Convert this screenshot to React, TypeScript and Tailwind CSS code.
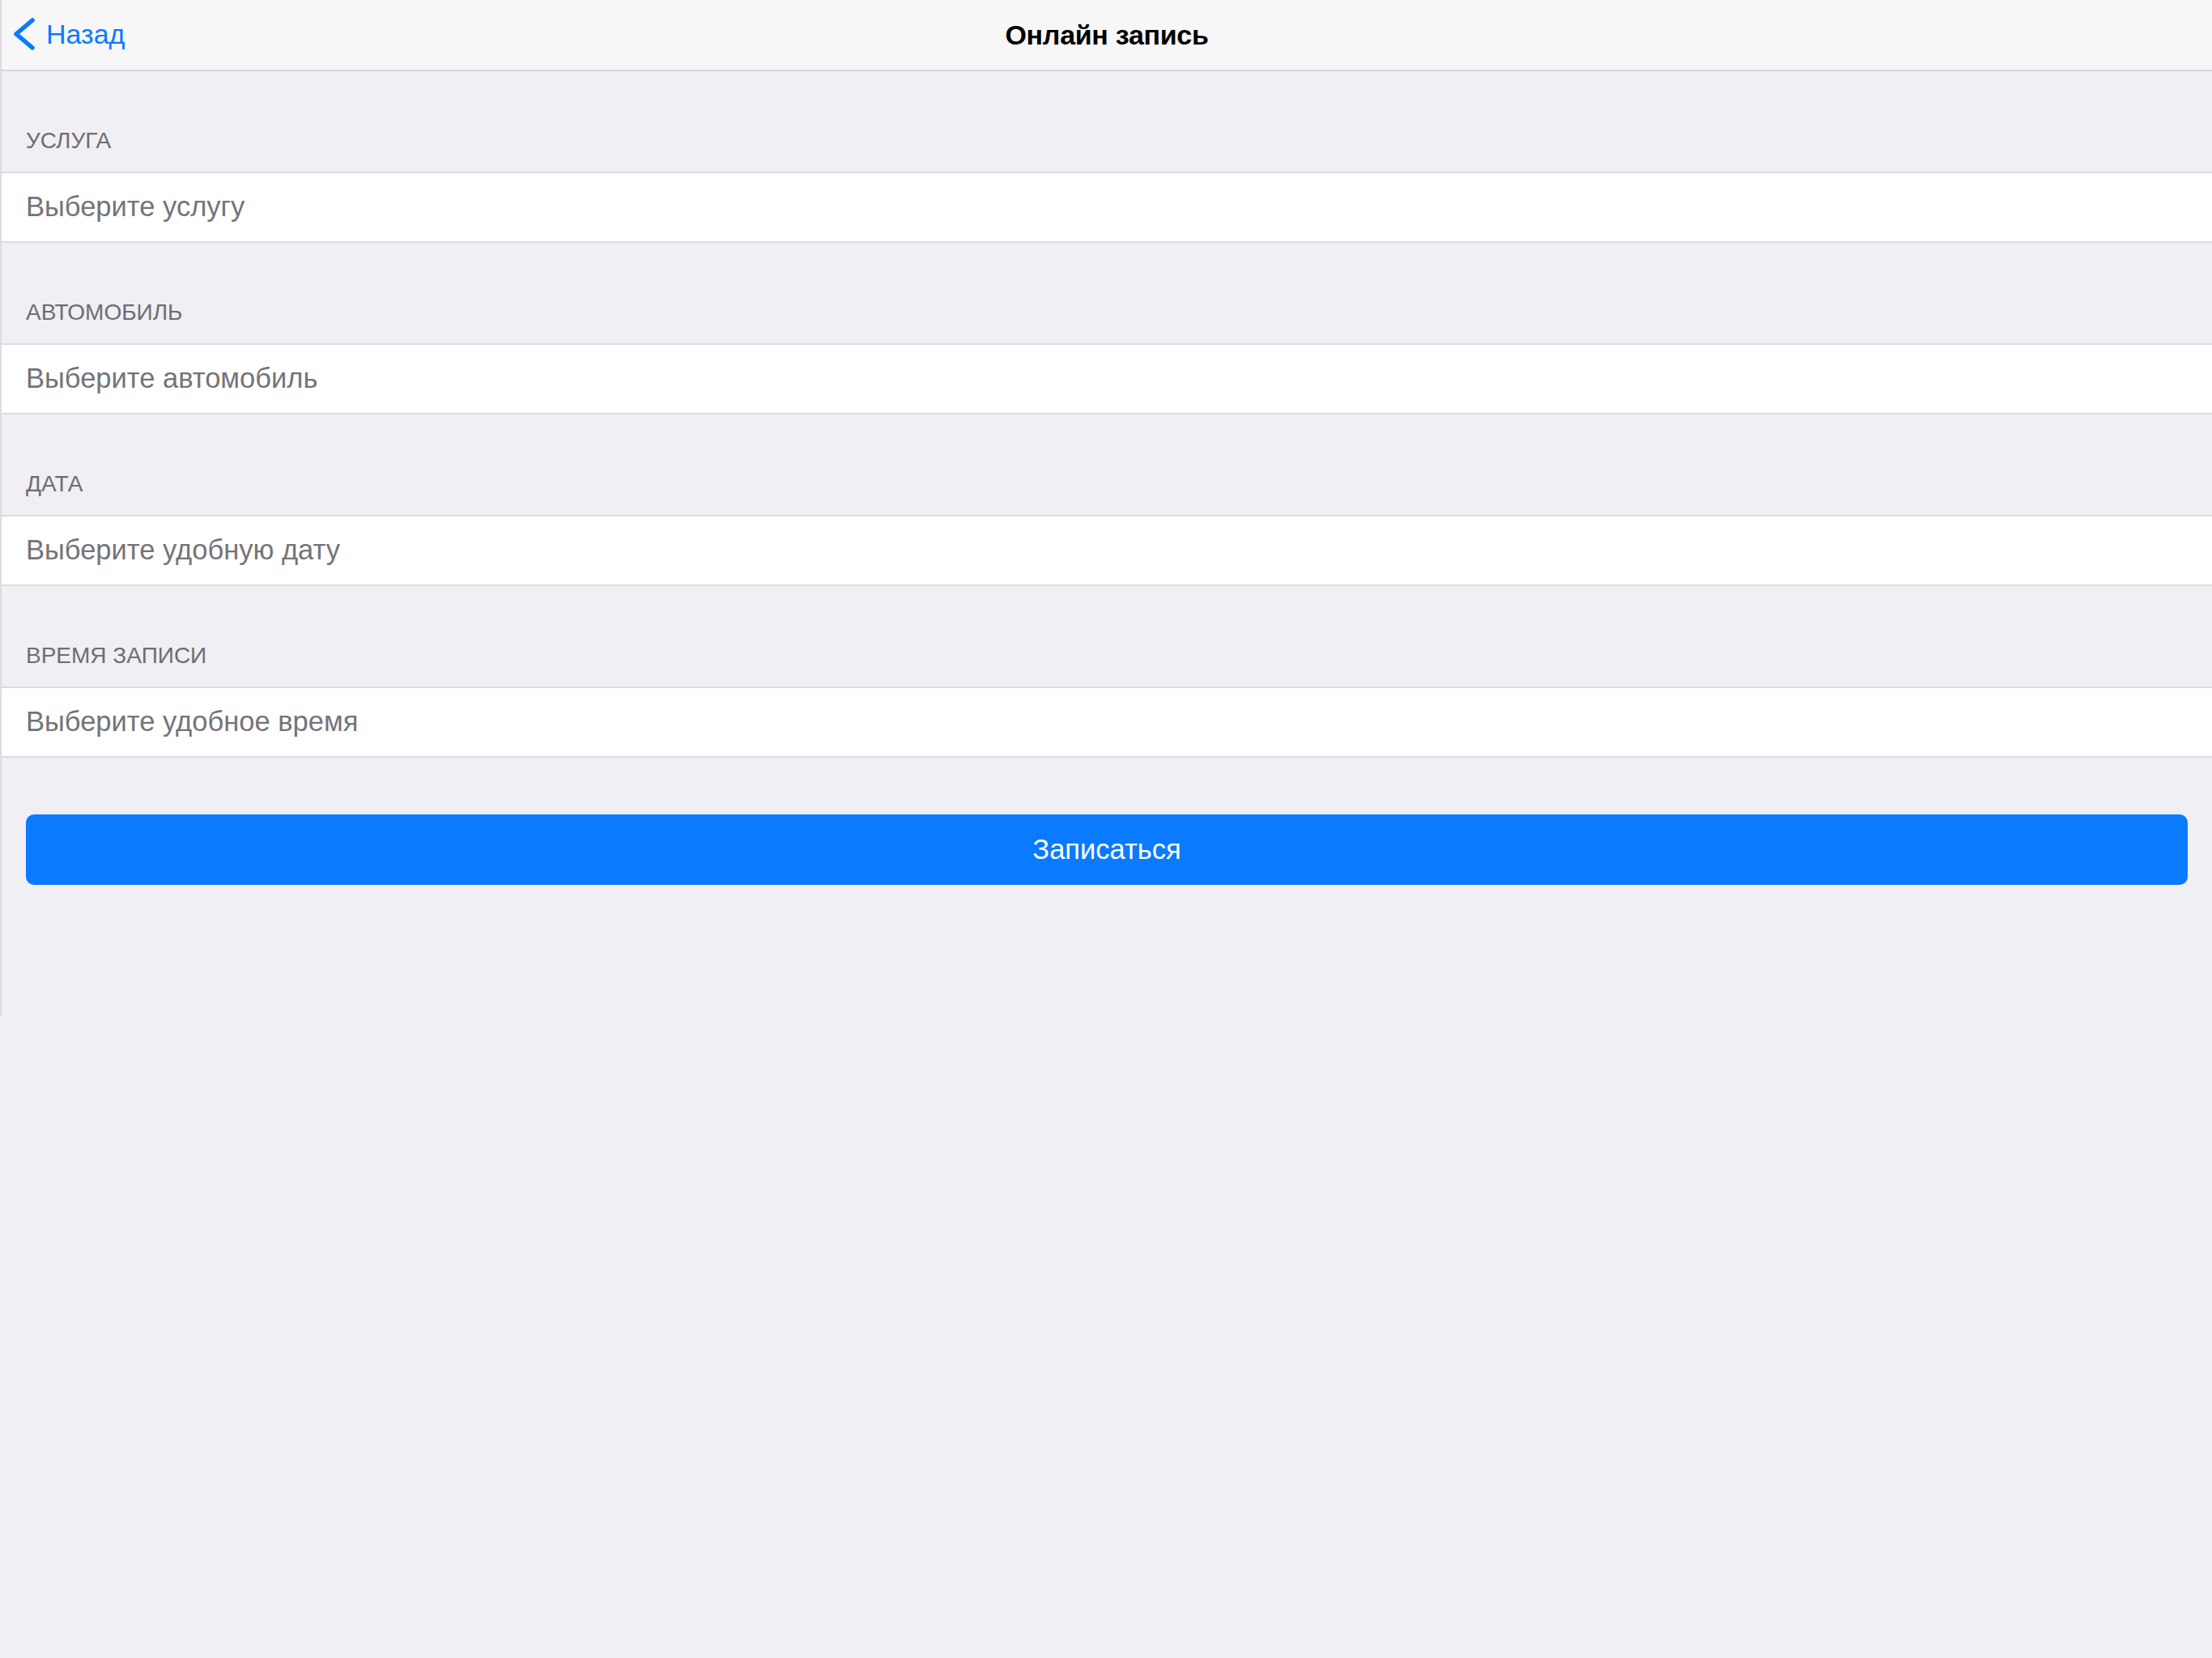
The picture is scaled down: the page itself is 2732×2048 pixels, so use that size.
const sections = [
  { label: "УСЛУГА", placeholder: "Выберите услугу" },
  { label: "АВТОМОБИЛЬ", placeholder: "Выберите автомобиль" },
  { label: "ДАТА", placeholder: "Выберите удобную дату" },
  { label: "ВРЕМЯ ЗАПИСИ", placeholder: "Выберите удобное время" },
];

function BackChevron() {
  return (
    <svg width="30" height="44" viewBox="0 0 30 44" fill="none">
      <path
        d="M26 5 L6 22 L26 39"
        stroke="#0a7aff"
        strokeWidth="5.5"
        strokeLinecap="round"
        strokeLinejoin="round"
      />
    </svg>
  );
}

export default function App() {
  return (
    <div
      className="min-h-[2048px] w-full bg-[#f0f0f5]"
      style={{ fontFamily: '"Liberation Sans", Arial, sans-serif' }}
    >
      <div className="h-[1256px] border-l-2 border-[#dcdce0] bg-[#efeff4]">
        {/* Nav bar */}
        <header className="relative flex h-[88px] items-center justify-center border-b-2 border-[#d6d6da] bg-[#f7f7f8]">
          <button className="absolute left-[12px] top-[20px] flex items-center gap-[13px] text-[34px] text-[#0a7aff]">
            <BackChevron />
            <span className="leading-none">Назад</span>
          </button>
          <h1 className="text-[34px] font-bold tracking-[-0.3px] text-black">Онлайн запись</h1>
        </header>

        {/* Form */}
        <div>
          {sections.map((s) => (
            <section key={s.label}>
              <div className="flex h-[124px] items-end px-[30px] pb-[24px] text-[28px] leading-none text-[#6d6d72]">
                {s.label}
              </div>
              <div className="flex h-[88px] items-center border-y-2 border-[#dcdce0] bg-white px-[30px] text-[34.5px] text-[#747478]">
                {s.placeholder}
              </div>
            </section>
          ))}
        </div>

        <div className="px-[30px] pt-[70px]">
          <button className="flex h-[87px] w-full items-center justify-center rounded-[10px] bg-[#0a7aff] text-[34.5px] text-white">
            Записаться
          </button>
        </div>
      </div>
    </div>
  );
}
